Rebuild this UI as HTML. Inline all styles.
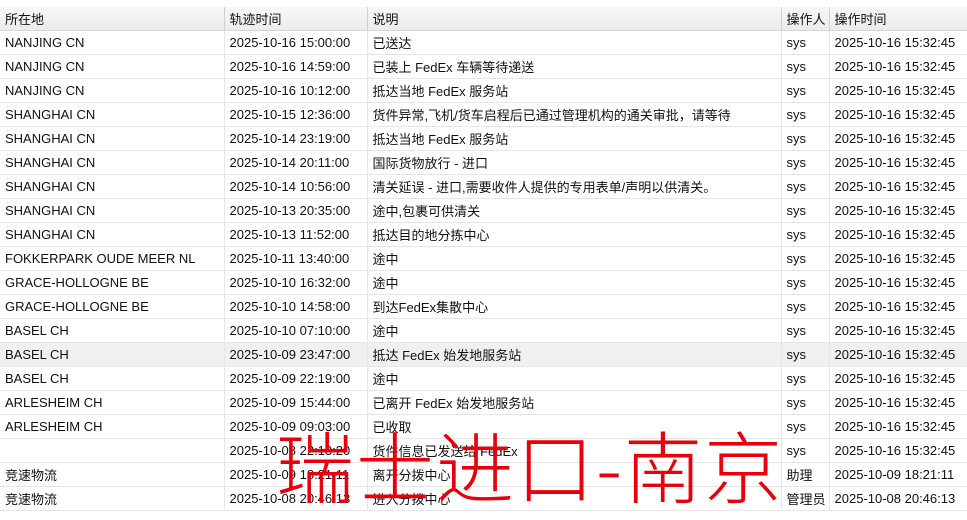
<!DOCTYPE html>
<html><head><meta charset="utf-8"><style>
body{margin:0;width:967px;height:517px;background:#fff;overflow:hidden;position:relative;font-family:"Liberation Sans","Noto Sans CJK SC",sans-serif;font-size:13px;color:#111}
table{position:absolute;top:7px;left:0;border-collapse:collapse;width:967px;table-layout:fixed}
td,th{height:23px;padding:0 0 0 5px;text-align:left;font-weight:normal;white-space:nowrap;overflow:hidden;border-bottom:1px solid #e6e6e6;border-right:1px solid #e6e6e6}
th{background:linear-gradient(#f7f7f7,#ececec);border-bottom:1px solid #d6d6d6;border-right:1px solid #d0d0d0}
tr.h td{background:#f0f0f0}
.ov{position:absolute;left:276px;top:419px;font-family:"Noto Sans CJK SC",sans-serif;font-weight:300;font-size:78px;color:#e8000b;line-height:90px;letter-spacing:2px;white-space:nowrap}
</style></head><body>
<table>
<colgroup><col style="width:224px"><col style="width:143px"><col style="width:414px"><col style="width:48px"><col style="width:138px"></colgroup>
<tr><th>所在地</th><th>轨迹时间</th><th>说明</th><th>操作人</th><th>操作时间</th></tr>
<tr><td>NANJING CN</td><td>2025-10-16 15:00:00</td><td>已送达</td><td>sys</td><td>2025-10-16 15:32:45</td></tr>
<tr><td>NANJING CN</td><td>2025-10-16 14:59:00</td><td>已装上 FedEx 车辆等待递送</td><td>sys</td><td>2025-10-16 15:32:45</td></tr>
<tr><td>NANJING CN</td><td>2025-10-16 10:12:00</td><td>抵达当地 FedEx 服务站</td><td>sys</td><td>2025-10-16 15:32:45</td></tr>
<tr><td>SHANGHAI CN</td><td>2025-10-15 12:36:00</td><td>货件异常,飞机/货车启程后已通过管理机构的通关审批，请等待</td><td>sys</td><td>2025-10-16 15:32:45</td></tr>
<tr><td>SHANGHAI CN</td><td>2025-10-14 23:19:00</td><td>抵达当地 FedEx 服务站</td><td>sys</td><td>2025-10-16 15:32:45</td></tr>
<tr><td>SHANGHAI CN</td><td>2025-10-14 20:11:00</td><td>国际货物放行 - 进口</td><td>sys</td><td>2025-10-16 15:32:45</td></tr>
<tr><td>SHANGHAI CN</td><td>2025-10-14 10:56:00</td><td>清关延误 - 进口,需要收件人提供的专用表单/声明以供清关。</td><td>sys</td><td>2025-10-16 15:32:45</td></tr>
<tr><td>SHANGHAI CN</td><td>2025-10-13 20:35:00</td><td>途中,包裹可供清关</td><td>sys</td><td>2025-10-16 15:32:45</td></tr>
<tr><td>SHANGHAI CN</td><td>2025-10-13 11:52:00</td><td>抵达目的地分拣中心</td><td>sys</td><td>2025-10-16 15:32:45</td></tr>
<tr><td>FOKKERPARK OUDE MEER NL</td><td>2025-10-11 13:40:00</td><td>途中</td><td>sys</td><td>2025-10-16 15:32:45</td></tr>
<tr><td>GRACE-HOLLOGNE BE</td><td>2025-10-10 16:32:00</td><td>途中</td><td>sys</td><td>2025-10-16 15:32:45</td></tr>
<tr><td>GRACE-HOLLOGNE BE</td><td>2025-10-10 14:58:00</td><td>到达FedEx集散中心</td><td>sys</td><td>2025-10-16 15:32:45</td></tr>
<tr><td>BASEL CH</td><td>2025-10-10 07:10:00</td><td>途中</td><td>sys</td><td>2025-10-16 15:32:45</td></tr>
<tr class="h"><td>BASEL CH</td><td>2025-10-09 23:47:00</td><td>抵达 FedEx 始发地服务站</td><td>sys</td><td>2025-10-16 15:32:45</td></tr>
<tr><td>BASEL CH</td><td>2025-10-09 22:19:00</td><td>途中</td><td>sys</td><td>2025-10-16 15:32:45</td></tr>
<tr><td>ARLESHEIM CH</td><td>2025-10-09 15:44:00</td><td>已离开 FedEx 始发地服务站</td><td>sys</td><td>2025-10-16 15:32:45</td></tr>
<tr><td>ARLESHEIM CH</td><td>2025-10-09 09:03:00</td><td>已收取</td><td>sys</td><td>2025-10-16 15:32:45</td></tr>
<tr><td></td><td>2025-10-08 22:13:20</td><td>货件信息已发送给 FedEx</td><td>sys</td><td>2025-10-16 15:32:45</td></tr>
<tr><td>竞速物流</td><td>2025-10-09 18:21:11</td><td>离开分拨中心</td><td>助理</td><td>2025-10-09 18:21:11</td></tr>
<tr><td>竞速物流</td><td>2025-10-08 20:46:13</td><td>进入分拨中心</td><td>管理员</td><td>2025-10-08 20:46:13</td></tr>
</table>
<div class="ov">瑞士进口-南京</div>
</body></html>
